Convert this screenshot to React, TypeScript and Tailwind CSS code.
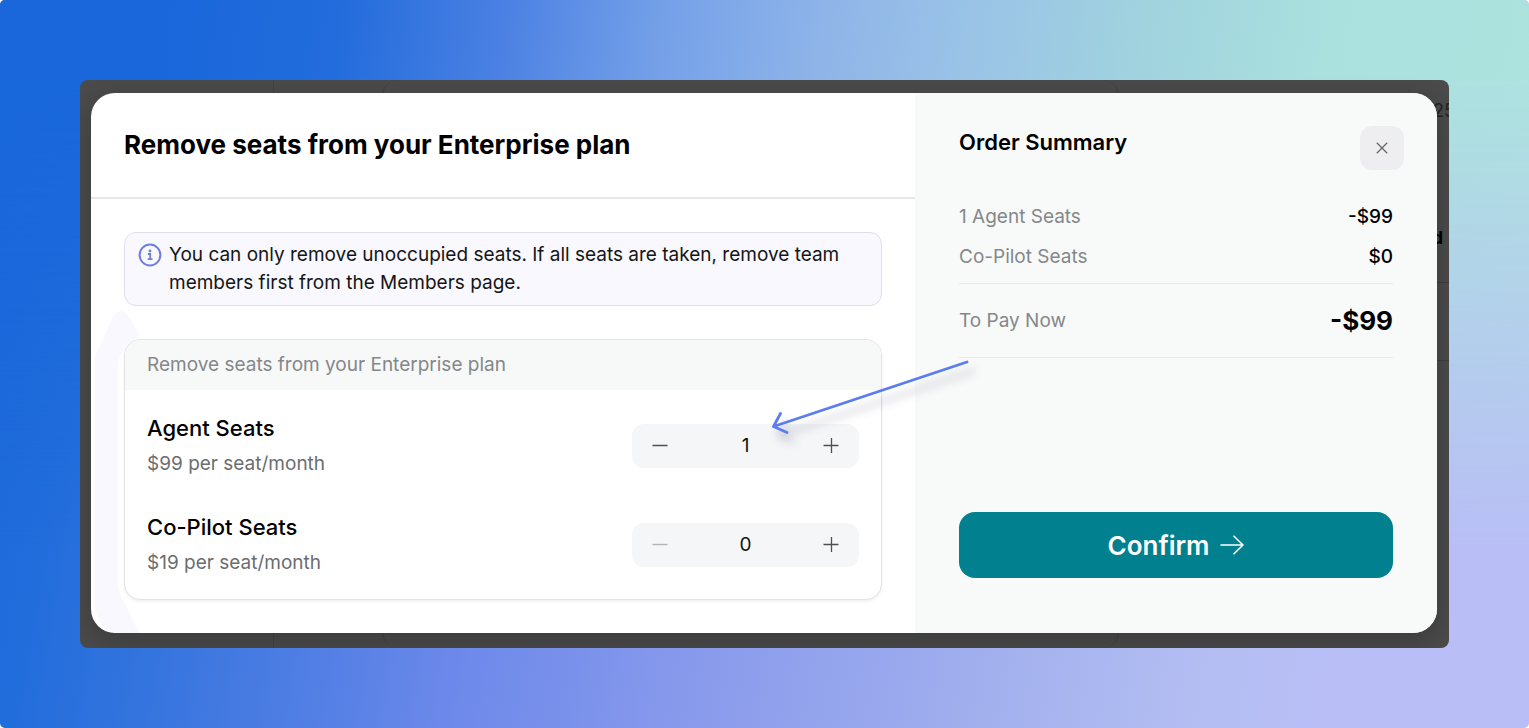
import { useState } from "react";

const seats = [
  { id: "agent", name: "Agent Seats", price: 99, initial: 1 },
  { id: "copilot", name: "Co-Pilot Seats", price: 19, initial: 0 },
];

function formatAmount(amount: number) {
  return amount > 0 ? `-$${amount}` : "$0";
}

function InfoIcon() {
  return (
    <svg className="w-6 h-6 shrink-0 text-[#6f7fdc]" viewBox="0 0 24 24" fill="none" stroke="currentColor" aria-hidden="true">
      <circle cx="12" cy="12" r="10.4" strokeWidth={2} />
      <path d="M9.900 11h2.300v5M9.700 16.200h4.800" strokeWidth={1.8} />
      <circle cx="12" cy="8" r="1.400" fill="currentColor" stroke="none" />
    </svg>
  );
}

function Stepper({
  label,
  value,
  onChange,
}: {
  label: string;
  value: number;
  onChange: (value: number) => void;
}) {
  return (
    <div className="flex items-center justify-between w-[227px] h-11 rounded-xl bg-[#f5f6f8] text-[#4d4f52]">
      <button
        type="button"
        aria-label={`Fewer ${label}`}
        disabled={value === 0}
        onClick={() => onChange(value - 1)}
        className="flex items-center justify-center w-14 h-11 disabled:text-[#b3b5b9]"
      >
        <svg className="w-4 h-4" viewBox="0 0 16 16" stroke="currentColor" strokeWidth={1.4} aria-hidden="true">
          <path d="M0.5 7.500h15" />
        </svg>
      </button>
      <output aria-label={label} className="text-[19px] leading-7 text-[#111111]">
        {value}
      </output>
      <button
        type="button"
        aria-label={`More ${label}`}
        onClick={() => onChange(value + 1)}
        className="flex items-center justify-center w-14 h-11"
      >
        <svg className="w-4 h-4" viewBox="0 0 16 16" stroke="currentColor" strokeWidth={1.3} aria-hidden="true">
          <path d="M0.5 7.500h15M8.500 0v15" />
        </svg>
      </button>
    </div>
  );
}

export default function App() {
  const [counts, setCounts] = useState(seats.map((s) => s.initial));
  const total = seats.reduce((sum, s, i) => sum + s.price * counts[i], 0);

  return (
    <main className="relative min-h-screen p-20 rounded-[5px] overflow-hidden bg-[linear-gradient(100deg,#1967db_0%,#216ddc_8%,#3474de_16%,#5a82e6_29%,#6b88ea_34%,#8a9bec_50%,#a3b1ee_68%,#b4bef3_80%,#b9bff6_89%)] font-['Inter','Liberation_Sans',sans-serif] text-black">
      {/* Mint light in the top right corner */}
      <div className="absolute inset-0 bg-[linear-gradient(97deg,#1967db_0%,#1967db_10%,#226cdc_21%,#4a80e3_31%,#74a0e8_41%,#8eb4e8_51%,#9ac3e7_60%,#a0d3de_71%,#aae0de_82%,#aee4de_100%)] [mask-image:linear-gradient(to_bottom,black_10%,transparent_75%)]" />

      <div className="relative flex flex-col rounded-lg overflow-hidden bg-[#494a49] pt-[13px] pb-[15px] pl-[11px] pr-3">
        {/* Dimmed page behind the dialog */}
        <div aria-hidden="true" className="absolute inset-0 text-[#222222]">
          <div className="absolute inset-y-0 left-[193px] w-px bg-[#424342]" />
          <div className="absolute inset-y-0 left-[302px] right-[330px] rounded-2xl border-x border-[#414241]" />
          <div className="absolute top-[21px] -right-1.5 text-lg leading-5">25</div>
          <div className="absolute top-[148px] right-1.5 text-lg leading-5 font-bold text-black">d</div>
          <div className="absolute top-[202px] right-0 w-3 h-px bg-[#3b3c3b]" />
          <div className="absolute top-[280px] right-0 w-3 h-px bg-[#3b3c3b]" />
        </div>

        <div
          role="dialog"
          aria-labelledby="dialog-title"
          className="relative grid grid-cols-[824fr_522fr] rounded-3xl bg-white shadow-[0_8px_24px_rgba(0,0,0,0.2)]"
        >
          {/* Seats */}
          <section className="relative">
            <svg className="absolute left-0 bottom-0 w-14 h-[325px]" viewBox="0 0 56 325" fill="#f9f8fe" aria-hidden="true">
              <path d="M4 48L22 9Q30-3 38 9L49 28Q27 38 27 60V272Q27 286 33 294L48 325H24Q4 318 4 294Z" />
            </svg>

            <header className="border-b-2 border-[#e6e6ea] px-[33px] pt-9 pb-9">
              <h1 id="dialog-title" className="text-[26px] leading-8 font-bold">
                Remove seats from your Enterprise plan
              </h1>
            </header>

            <div className="relative px-[33px] pt-[33px] pb-[33px]">
              <div className="flex gap-[7px] rounded-xl border border-[#dfdfe9] bg-[#f8f8fe] px-[13px] py-2">
                <div className="pt-0.5">
                  <InfoIcon />
                </div>
                <p className="text-[19px] leading-7 text-[#151515]">
                  You can only remove unoccupied seats. If all seats are taken, remove team members first from the
                  Members page.
                </p>
              </div>

              <div className="mt-[33px] rounded-2xl overflow-hidden border border-[#e1e3e8] bg-white shadow-[0_2px_3px_rgba(0,0,0,0.05)]">
                <h2 className="bg-[#f7f9f9] px-[22px] py-[11px] text-[19px] leading-7 text-[#85878a]">
                  Remove seats from your Enterprise plan
                </h2>
                <div className="flex flex-col gap-[35px] px-[22px] pt-6 pb-[22px]">
                  {seats.map((seat, i) => (
                    <div key={seat.id} className="flex items-center justify-between">
                      <div className="flex flex-col gap-2">
                        <h3 className="text-[22px] leading-7 font-medium">{seat.name}</h3>
                        <p className="text-[19px] leading-7 text-[#6b6d70]">${seat.price} per seat/month</p>
                      </div>
                      <Stepper
                        label={seat.name}
                        value={counts[i]}
                        onChange={(value) => setCounts(counts.map((c, j) => (j === i ? value : c)))}
                      />
                    </div>
                  ))}
                </div>
              </div>
            </div>

            {/* Pointer to the agent stepper */}
            <svg
              className="absolute z-10 top-[262px] right-[-60px] w-[210px] h-[90px] overflow-visible pointer-events-none drop-shadow-[6px_9px_5px_rgba(40,40,80,0.3)]"
              viewBox="0 0 210 90"
              fill="none"
              stroke="#5b7dee"
              strokeWidth={2.8}
              strokeLinecap="round"
              strokeLinejoin="round"
              aria-hidden="true"
            >
              <path d="M202 7L8.500 71.500M15.500 58.500L8.500 71.500L22 77.500" />
            </svg>
          </section>

          {/* Order summary */}
          <aside className="flex flex-col rounded-r-3xl bg-[#f8faf9] px-11 pt-[33px] pb-[55px]">
            <div className="flex items-start justify-between -mr-[11px]">
              <h2 className="text-[22px] leading-8 font-semibold">Order Summary</h2>
              <button
                type="button"
                aria-label="Close"
                className="flex items-center justify-center w-11 h-11 rounded-xl bg-[#eeeef1] text-[#66686b]"
              >
                <svg className="w-3 h-3" viewBox="0 0 12 12" stroke="currentColor" strokeWidth={1.3} aria-hidden="true">
                  <path d="M0.800 0.800l10.400 10.400M11.200 0.800L0.800 11.200" />
                </svg>
              </button>
            </div>

            <dl className="mt-[33px] text-[19px] leading-7 text-[#85878a]">
              <div className="flex flex-col gap-3 pb-3 border-b border-[#e8eaec]">
                {seats.map((seat, i) => (
                  <div key={seat.id} className="flex justify-between">
                    <dt>{counts[i] > 0 ? `${counts[i]} ${seat.name}` : seat.name}</dt>
                    <dd className="font-medium text-black">{formatAmount(seat.price * counts[i])}</dd>
                  </div>
                ))}
              </div>
              <div className="flex items-center justify-between pt-[23px] pb-[22px] border-b border-[#e8eaec]">
                <dt>To Pay Now</dt>
                <dd className="text-[26px] font-bold text-black">{formatAmount(total)}</dd>
              </div>
            </dl>

            <button
              type="button"
              className="mt-auto flex items-center justify-center gap-[11px] h-[66px] rounded-2xl bg-[#01818f] text-[26px] font-semibold text-white"
            >
              Confirm
              <svg
                className="w-6 h-6"
                viewBox="0 0 24 24"
                fill="none"
                stroke="currentColor"
                strokeWidth={1.600}
                strokeLinecap="round"
                strokeLinejoin="round"
                aria-hidden="true"
              >
                <path d="M1 12h22M14 3.200L23 12l-9 8.800" />
              </svg>
            </button>
          </aside>
        </div>
      </div>
    </main>
  );
}
